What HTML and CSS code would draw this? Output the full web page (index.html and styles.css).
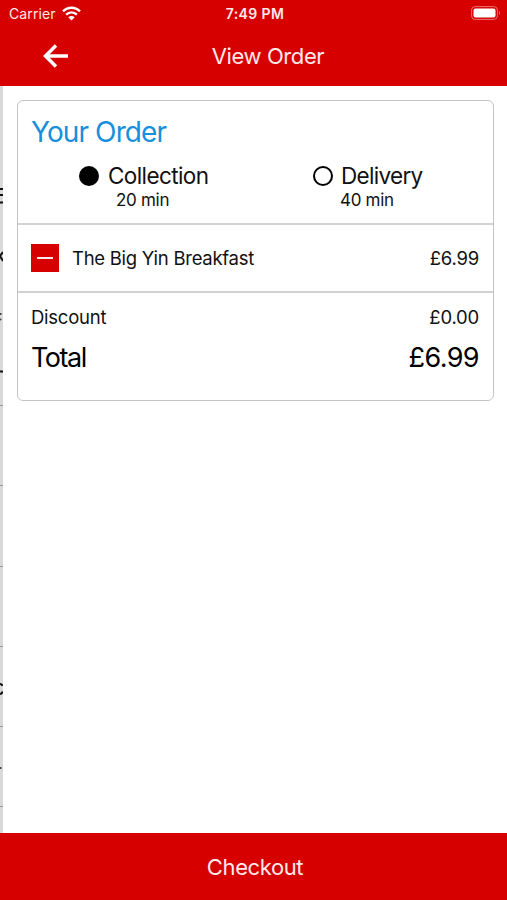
FILE: index.html
```html
<!DOCTYPE html>
<html lang="en">
<head>
<meta charset="utf-8">
<title>View Order</title>
<link rel="stylesheet" href="styles.css">
</head>
<body>
<div class="screen">
  <header class="top">
    <div class="status">
      <div class="carrier"><span class="carrier-name">Carrier</span>
        <svg class="wifi" width="19" height="15" viewBox="0 0 19 15" fill="none" stroke="#fff" stroke-width="2.5"><path d="M1 5.3C6 .4 13 .4 18 5.3M4.1 8.700C7.3 5.700 11.7 5.700 14.9 8.700"/><path d="M6.300 11.200C8.200 9.500 10.800 9.500 12.700 11.200L9.500 14.500Z" fill="#fff" stroke="none"/></svg>
      </div>
      <time class="clock">7:49 PM</time>
      <svg class="battery" width="30" height="14" viewBox="0 0 30 14"><rect x=".6" y=".6" width="25.8" height="12.8" rx="3.5" fill="none" stroke="#ec7070"/><rect x="2.5" y="2.4" width="22" height="9.2" rx="2" fill="#fff"/><path d="M28 5Q30.4 7 28 9Z" fill="#ec7070"/></svg>
    </div>
    <div class="nav">
      <svg class="back" width="26" height="24" viewBox="0 0 26 24" fill="none" stroke="#fff" stroke-width="3.5"><path d="M25 12H3M13 1.5L2.5 12L13 22.5"/></svg>
      <h1 class="nav-title">View Order</h1>
      <span></span>
    </div>
  </header>
  <div class="body">
    <svg class="edge" width="3" height="747" viewBox="0 0 3 747">
      <path d="M0 0H3V747H0Z" fill="#d9d9d9"/>
      <path d="M0 319.500H3M0 399.500H3M0 480.500H3M0 560.500H3M0 640.500H3M0 720.500H3" stroke="#999"/>
      <path d="M0 103H3M0 109H3M0 116.500H3M3 166L0 170L3 175M0 285.500H3" stroke="#111" stroke-width="2" fill="none"/>
      <path d="M0 228H1.500M0 233L1 234M0 682H1.500" stroke="#444" stroke-width="2"/>
      <path d="M0 598Q2 598 2.500 600M0 608Q2 608 2.500 605.500" stroke="#111" stroke-width="2" fill="none"/>
    </svg>
    <main class="content">
      <article class="card">
        <section class="order">
          <h2 class="heading">Your Order</h2>
          <div class="methods">
            <div class="method">
              <div class="choice"><i class="radio selected"></i><span class="collection">Collection</span></div>
              <div class="wait">20 min</div>
            </div>
            <div class="method">
              <div class="choice"><i class="radio"></i><span class="delivery">Delivery</span></div>
              <div class="wait">40 min</div>
            </div>
          </div>
        </section>
        <section class="item">
          <button class="remove" aria-label="Remove"><i class="minus"></i></button>
          <span class="item-name">The Big Yin Breakfast</span>
          <span class="price">£6.99</span>
        </section>
        <section class="summary">
          <div class="line"><span class="discount">Discount</span><span class="price">£0.00</span></div>
          <div class="line total"><span class="total-label">Total</span><span class="total-price">£6.99</span></div>
        </section>
      </article>
    </main>
  </div>
  <footer class="checkout">Checkout</footer>
</div>
</body>
</html>
```
FILE: styles.css
```css
* { box-sizing: border-box; }
body { margin: 0; font-family: Inter, "Liberation Sans", sans-serif; color: #111; background: #fff; }
h1, h2 { margin: 0; font-weight: 400; }
.screen { width: 507px; height: 900px; display: flex; flex-direction: column; overflow: hidden; white-space: nowrap; }
.top { height: 86px; flex: none; background: #d60000; color: #ffe9e9; }
.status { height: 27px; display: grid; grid-template-columns: 1fr auto 1fr; align-items: center; padding: 0 6px 0 9px; }
.carrier { display: flex; align-items: center; gap: 6px; font-size: 14px; letter-spacing: .1px; }
.wifi { margin-top: -1px; }
.clock { font-size: 14px; font-weight: 600; letter-spacing: .4px; }
.battery { justify-self: end; margin-top: -1px; }
.nav { height: 57px; display: grid; grid-template-columns: 1fr auto 1fr; align-items: center; padding: 0 14px 0 43px; }
.nav-title { font-size: 22px; letter-spacing: -.4px; }
.body { flex: 1; display: flex; min-height: 0; }
.edge { flex: none; display: block; }
.content { flex: 1; padding: 14px 13px 0 14px; }
.card { height: 301px; border: 1px solid #c4c4c4; border-radius: 6px; }
.order { height: 124px; padding: 14px 0 0; border-bottom: 2px solid #d2d2d2; }
.heading { margin-left: 13px; font-size: 28px; line-height: 34px; letter-spacing: -.9px; color: #168fdc; }
.methods { display: grid; grid-template-columns: 234px 1fr; padding-left: 61px; margin-top: 13px; }
.choice { display: flex; align-items: center; gap: 9px; height: 27px; font-size: 22.5px; letter-spacing: -.6px; }
.method + .method .choice { gap: 8px; letter-spacing: -.7px; }
.radio { width: 20px; height: 20px; border: 2px solid #000; border-radius: 50%; }
.selected { background: #000; }
.wait { padding-left: 37px; font-size: 17px; line-height: 22px; letter-spacing: -.3px; }
.method + .method .wait { padding-left: 27px; }
.item { height: 68px; display: flex; align-items: center; padding: 0 14px 0 13px; border-bottom: 2px solid #d2d2d2; font-size: 18.5px; letter-spacing: -.27px; }
.remove { width: 28px; height: 28px; padding: 0; border: 0; background: #d60000; display: grid; place-items: center; }
.minus { width: 16px; height: 2px; background: #ffe9e9; }
.item-name { margin-left: 13px; }
.price { margin-left: auto; font-size: 18.5px; letter-spacing: -.2px; }
.summary { padding: 10px 14px 0 13px; }
.line { display: flex; justify-content: space-between; align-items: center; height: 28px; font-size: 18.5px; letter-spacing: -.25px; }
.total { height: 36px; margin-top: 8px; font-size: 27px; color: #000; }
.total-label { letter-spacing: -1.5px; }
.total-price { letter-spacing: -.6px; }
.checkout { height: 67px; flex: none; display: grid; place-items: center; padding-left: 3px; background: #d60000; color: #ffe9e9; font-size: 22px; letter-spacing: -.4px; }
```
